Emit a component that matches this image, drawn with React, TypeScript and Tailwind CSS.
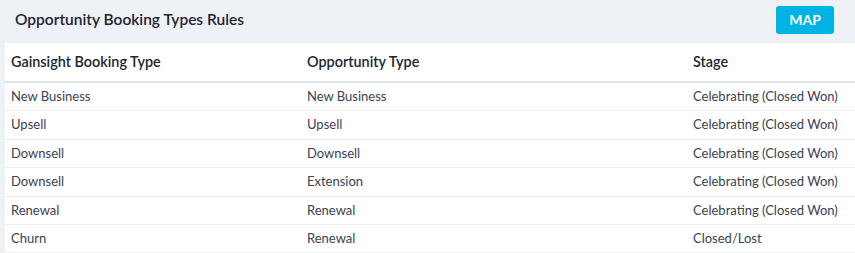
import React from "react";

const rows = [
  ["New Business", "New Business", "Celebrating (Closed Won)"],
  ["Upsell", "Upsell", "Celebrating (Closed Won)"],
  ["Downsell", "Downsell", "Celebrating (Closed Won)"],
  ["Downsell", "Extension", "Celebrating (Closed Won)"],
  ["Renewal", "Renewal", "Celebrating (Closed Won)"],
  ["Churn", "Renewal", "Closed/Lost"],
];

export default function App() {
  return (
    <div
      className="w-[855px] h-[253px] overflow-hidden bg-[#eef1f5]"
      style={{ fontFamily: "Lato, 'Open Sans', sans-serif" }}
    >
      <div className="flex items-center justify-between h-[38px] pl-[15px] pr-[21px] pt-[1px]">
        <div className="text-[15.5px] font-semibold text-[#1e2430]">Opportunity Booking Types Rules</div>
        <button className="h-[28px] w-[58px] rounded-[3px] bg-[#00b3e3] text-white text-[14px] font-bold">MAP</button>
      </div>
      <div className="ml-[5px] mt-[5px] bg-white">
        <div className="flex items-center h-[38px] border-b-2 border-[#dfe2e7] box-content text-[14.4px] font-semibold text-[#1e2430]">
          <div className="w-[296px] pl-[6px]">Gainsight Booking Type</div>
          <div className="w-[386px] pl-[6px]">Opportunity Type</div>
          <div className="flex-1 pl-[6px]">Stage</div>
        </div>
        {rows.map((r, i) => (
          <div
            key={i}
            className="flex items-center h-[28.4px] border-b border-[#eceef1] text-[13px] text-[#3a4150]"
          >
            <div className="w-[296px] pl-[6px]">{r[0]}</div>
            <div className="w-[386px] pl-[6px]">{r[1]}</div>
            <div className="flex-1 pl-[6px]">{r[2]}</div>
          </div>
        ))}
      </div>
    </div>
  );
}
